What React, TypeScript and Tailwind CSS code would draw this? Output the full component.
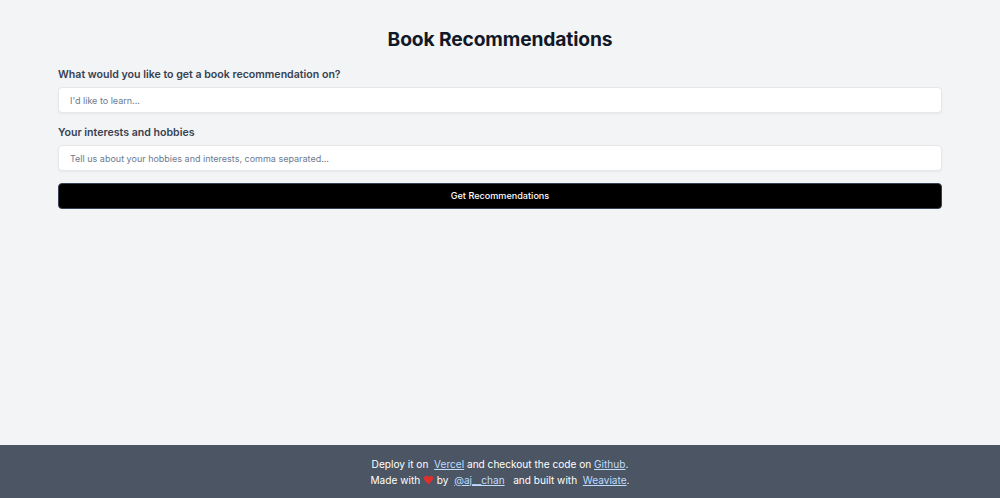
export default function App() {
  return (
    <div className="flex h-[498px] flex-col justify-between overflow-hidden bg-[#f3f4f6] font-['Inter',sans-serif]">
      <main className="flex flex-col px-[58px] pt-[26px]">
        <h1 className="text-center text-[19.25px] leading-[26px] font-bold tracking-[-0.15px] text-[#111827]">Book Recommendations</h1>
        <label className="mt-[15px] text-[10.6px] leading-[16px] font-semibold text-[#374151]">What would you like to get a book recommendation on?</label>
        <input
          placeholder="I'd like to learn..."
          className="mt-[4px] h-[26px] rounded-[4px] border border-[#e5e7eb] bg-white px-[11px] text-[9px] shadow-[0_1px_2px_rgba(0,0,0,0.05)] outline-none placeholder:text-[#6b7a90]"
        />
        <label className="mt-[12px] text-[10.6px] leading-[16px] font-semibold text-[#374151]">Your interests and hobbies</label>
        <input
          placeholder="Tell us about your hobbies and interests, comma separated..."
          className="mt-[4px] h-[26px] rounded-[4px] border border-[#e5e7eb] bg-white px-[11px] text-[9px] shadow-[0_1px_2px_rgba(0,0,0,0.05)] outline-none placeholder:text-[#6b7a90]"
        />
        <button className="mt-[12px] h-[26px] rounded-[4px] border border-[#374151] bg-black text-[9.1px] font-medium text-white">Get Recommendations</button>
      </main>
      <footer className="flex h-[53px] flex-col items-center justify-center bg-[#4b5563] text-[10.1px] leading-[16px] text-white">
        <p className="whitespace-pre">Deploy it on  <a href="#" className="text-[#bfdbfe] underline">Vercel</a> and checkout the code on <a href="#" className="text-[#bfdbfe] underline">Github</a>.</p>
        <p className="whitespace-pre">
          {"Made with "}
          <svg viewBox="0 0 24 24" className="inline-block h-[10px] w-[11px] align-[-1px]">
            <path fill="#e0302e" d="M12 22C8 18 1 13.500 1 7.500 1 4 3.600 1.800 6.600 1.800c2.200 0 4.200 1.200 5.400 3.200 1.200-2 3.200-3.200 5.400-3.200C20.400 1.800 23 4 23 7.500 23 13.500 16 18 12 22z" />
          </svg>
          {" by  "}<a href="#" className="text-[#bfdbfe] underline">@aj__chan</a>{"   and built with  "}<a href="#" className="text-[#bfdbfe] underline">Weaviate</a>.
        </p>
      </footer>
    </div>
  );
}
